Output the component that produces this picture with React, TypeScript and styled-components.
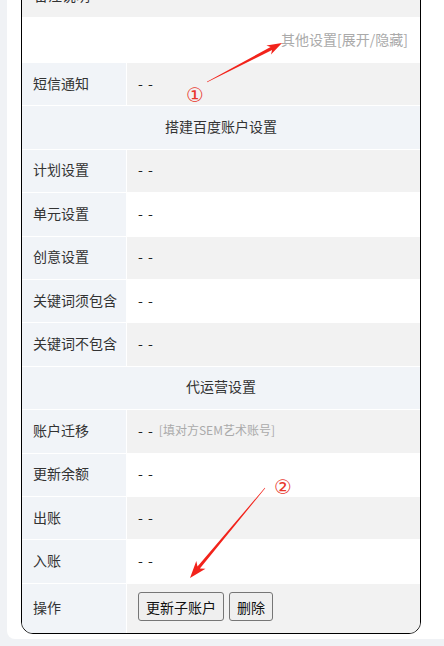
import React from 'react';
import styled, { createGlobalStyle, css } from 'styled-components';

const GlobalStyle = createGlobalStyle`
  html, body {
    margin: 0;
    padding: 0;
    background: #f0f2f5;
    overflow: hidden;
  }
  body {
    font-family: "Noto Sans CJK SC", "Liberation Sans", sans-serif;
    font-size: 14px;
    color: #333;
  }
`;

type Tone = 'gray' | 'white';

const rowsA: [string, string][] = [
  ['计划设置', '- -'],
  ['单元设置', '- -'],
  ['创意设置', '- -'],
  ['关键词须包含', '- -'],
  ['关键词不包含', '- -'],
];

const rowsB: [string, string][] = [
  ['更新余额', '- -'],
  ['出账', '- -'],
  ['入账', '- -'],
];

const tone = (i: number): Tone => (i % 2 === 0 ? 'gray' : 'white');

const App: React.FC = () => (
  <Page>
    <GlobalStyle />
    <Card>
      <Table>
        <FullRow $tone="gray" $top>
          <span>备注说明</span>
        </FullRow>
        <FullRow $tone="white" $right>
          <Hint>其他设置[展开/隐藏]</Hint>
        </FullRow>
        <Row $tone="gray">
          <Label>短信通知</Label>
          <Value>- -</Value>
        </Row>
        <SectionRow>搭建百度账户设置</SectionRow>
        {rowsA.map(([k, v], i) => (
          <Row key={k} $tone={tone(i)}>
            <Label>{k}</Label>
            <Value>{v}</Value>
          </Row>
        ))}
        <SectionRow>代运营设置</SectionRow>
        <Row $tone="gray">
          <Label>账户迁移</Label>
          <Value>
            - -<Note>[填对方SEM艺术账号]</Note>
          </Value>
        </Row>
        {rowsB.map(([k, v], i) => (
          <Row key={k} $tone={tone(i + 1)}>
            <Label>{k}</Label>
            <Value>{v}</Value>
          </Row>
        ))}
        <Row $tone="gray" $last>
          <Label>操作</Label>
          <Value>
            <Button>更新子账户</Button>
            <Button>删除</Button>
          </Value>
        </Row>
      </Table>
    </Card>
    <Annotations />
  </Page>
);

export default App;

type Pt = [number, number];

const arrowPoints = (tail: Pt, tip: Pt, headLen: number, headHalf: number) => {
  const dx = tip[0] - tail[0];
  const dy = tip[1] - tail[1];
  const len = Math.hypot(dx, dy);
  const ux = dx / len;
  const uy = dy / len;
  const nx = -uy;
  const ny = ux;
  const at = (d: number, w: number): string =>
    `${(tip[0] - ux * d + nx * w).toFixed(1)},${(tip[1] - uy * d + ny * w).toFixed(1)}`;
  const neck = headLen * 0.8;
  return [
    at(len, 0.3),
    at(neck, 1.6),
    at(headLen, headHalf),
    at(0, 0),
    at(headLen, -headHalf),
    at(neck, -1.6),
    at(len, -0.3),
  ].join(' ');
};

const Annotations: React.FC = () => (
  <Overlay viewBox="0 0 444 646" width="444" height="646">
    <polygon points={arrowPoints([207, 82], [282, 43], 15, 5)} fill="#f2231b" />
    <polygon points={arrowPoints([265, 488], [190, 578], 17, 6)} fill="#f2231b" />
    <MarkText x="195" y="102">①</MarkText>
    <MarkText x="283" y="494">②</MarkText>
  </Overlay>
);

const Page = styled.div`
  position: relative;
  height: 646px;
  padding-left: 7px;
  overflow: hidden;
`;

const Card = styled.div`
  width: 460px;
  margin-top: -26px;
  padding: 0 0 5px 14px;
  background: #fff;
  border-radius: 8px;
`;

const Table = styled.div`
  width: 398px;
  border: 1px solid #000;
  border-radius: 0 0 12px 12px;
  overflow: hidden;
`;

const toneBg = (t: Tone) => (t === 'gray' ? '#f2f2f2' : '#ffffff');

const FullRow = styled.div<{ $tone: Tone; $right?: boolean; $top?: boolean }>`
  display: flex;
  align-items: center;
  justify-content: ${(p) => (p.$right ? 'flex-end' : 'flex-start')};
  box-sizing: border-box;
  height: ${(p) => (p.$top ? '43px' : '45px')};
  padding: 0 12px ${(p) => (p.$top ? '3px' : '3px')};
  background: ${(p) => toneBg(p.$tone)};
  border-bottom: 1px solid #fff;
`;

const Hint = styled.span`
  color: #aaa;
  font-size: 14px;
`;

const SectionRow = styled.div`
  box-sizing: border-box;
  height: 43.4px;
  padding-bottom: 3px;
  display: flex;
  align-items: center;
  justify-content: center;
  background: #f1f4f8;
  border-bottom: 1px solid #fff;
  color: #333;
`;

const Row = styled.div<{ $tone: Tone; $last?: boolean }>`
  display: grid;
  grid-template-columns: 105px 1fr;
  box-sizing: border-box;
  ${(p) =>
    p.$last
      ? css`
          min-height: 49px;
        `
      : css`
          height: 43.4px;
          border-bottom: 1px solid #fff;
        `}
  & > :last-child {
    background: ${(p) => toneBg(p.$tone)};
  }
`;

const Label = styled.div`
  display: flex;
  align-items: center;
  padding: 0 0 3px 11px;
  background: #f1f4f8;
  border-right: 1px solid #fff;
  color: #333;
`;

const Value = styled.div`
  display: flex;
  align-items: center;
  gap: 5px;
  padding: 0 0 3px 11px;
  color: #222;
  letter-spacing: 1px;
  white-space: pre;
`;

const Note = styled.span`
  color: #aaa;
  font-size: 12px;
  letter-spacing: 0;
`;

const Button = styled.button`
  height: 29px;
  padding: 0 7px;
  background: #efefef;
  border: 1px solid #767676;
  border-radius: 3px;
  color: #111;
  font-family: "Noto Sans CJK SC", sans-serif;
  font-size: 14px;
  letter-spacing: 0;
`;

const Overlay = styled.svg`
  position: absolute;
  left: 0;
  top: 0;
  pointer-events: none;
`;

const MarkText = styled.text`
  fill: #e8362c;
  font-size: 20px;
  font-family: "DejaVu Sans", "Noto Sans CJK SC", sans-serif;
  text-anchor: middle;
`;
